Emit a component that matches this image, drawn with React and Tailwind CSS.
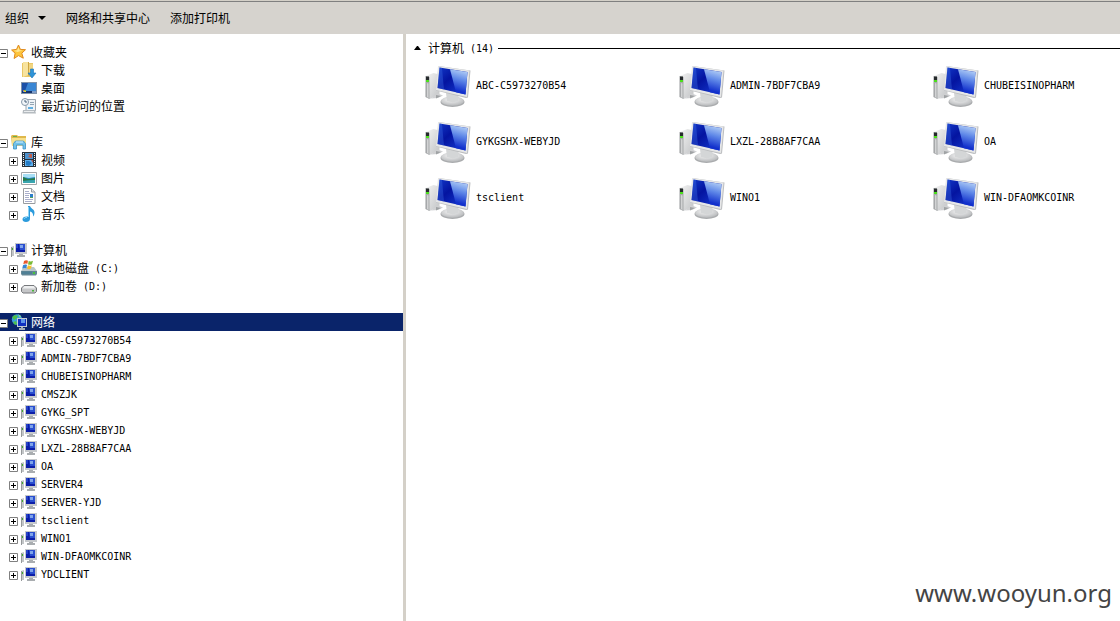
import React, { useState } from "react";

const PcSmall = () => (
  <svg width="16" height="16" viewBox="0 0 16 16" className="shrink-0" aria-hidden="true">
    <path d="M0 5l3-1v10H0z" fill="#c3c6c8" />
    <path d="M0 5h1v10H0z" fill="#96999b" />
    <path d="M1 6h1v2H1z" fill="#3fae2a" />
    <path d="M4 1h12v11H4z" fill="#c6c9cc" />
    <path d="M5 2h9v8H5z" fill="#0c1ea8" />
    <path d="M8 2h6v6H9z" fill="#2a4fd0" />
    <path d="M9 3h3v3H9z" fill="#7fa4ea" />
    <path d="M5 2h2v4H5z" fill="#2743c8" />
    <path d="M8 12h4v1h2v2H6v-2h2z" fill="#a9adb0" />
  </svg>
);

const Star = () => (
  <svg width="16" height="16" viewBox="0 0 16 16" className="shrink-0" aria-hidden="true">
    <path d="M7.500 1l1.900 4.400 5.100.3-3.700 3.500 1.500 5-4.800-2.600-4.400 2.900 1-5.300L.6 6l4.900-.6z" fill="#fdc53c" stroke="#e08a1c" strokeLinejoin="round" />
    <path d="M7.500 3l1 3.200 3 .3-5 1.500-3.500-1.300 3.100-.4z" fill="#ffe794" />
  </svg>
);

const Download = () => (
  <svg width="16" height="16" viewBox="0 0 16 16" className="shrink-0" aria-hidden="true">
    <path d="M1 1h11v14H1z" fill="#e9c766" />
    <path d="M2 0h5v13l-5 2z" fill="#f7e39e" />
    <path d="M7 0h1v13l-1 1z" fill="#cfa640" />
    <path d="M8 2h4v9H8z" fill="#f1d581" />
    <path d="M9.500 7h3v4H15l-4 5-4-5h2.500z" fill="#2f94d8" stroke="#1773b9" strokeWidth=".6" />
  </svg>
);

const Desktop = () => (
  <svg width="16" height="16" viewBox="0 0 16 16" className="shrink-0" aria-hidden="true">
    <path d="M0 2h16v12H0z" fill="#8193ab" />
    <path d="M1 3h14v8H1z" fill="#1b50a8" />
    <path d="M7 3h8v8H4z" fill="#3a86d4" />
    <path d="M1 11h14v2H1z" fill="#16356e" />
    <path d="M2 10h1v1H2z" fill="#e9633a" />
    <path d="M3 10h2v1H3z" fill="#7fc241" />
    <path d="M3 11h2v1H3z" fill="#f4c33b" />
    <path d="M2 11h1v1H2z" fill="#58a8ee" />
    <path d="M11 11h4v2h-4z" fill="#7d9cc8" />
  </svg>
);

const Recent = () => (
  <svg width="16" height="16" viewBox="0 0 16 16" className="shrink-0" aria-hidden="true">
    <path d="M5 1.500h9.500v11H5z" fill="#eef3f7" stroke="#9ba5ae" />
    <path d="M9 4h4v1H9zM9 6h4v1H9z" fill="#93a4b3" />
    <path d="M7 9h5v2H7z" fill="#62afe0" />
    <path d="M2 12h12l1 3.500H1.500z" fill="#b5bbc0" />
    <path d="M3 13h10v1H3z" fill="#e9ecee" />
    <circle cx="4" cy="4" r="3.500" fill="#f1f5f8" stroke="#8799aa" />
    <path d="M4 2v2h2" fill="none" stroke="#46607b" />
  </svg>
);

const Library = () => (
  <svg width="16" height="16" viewBox="0 0 16 16" className="shrink-0" aria-hidden="true">
    <path d="M0 2l1-1h5l1 1h8v10H1z" fill="#dfb84b" />
    <path d="M2 2h4v1H2z" fill="#67b04b" />
    <path d="M1 4h14v8H1z" fill="#f8e08b" />
    <path d="M2.500 15V9.500L4.500 7h8l2 2.500V15h-2.500v-4H5.500v4z" fill="#74c2e9" stroke="#3d92c7" strokeWidth=".8" />
    <path d="M5 8h7" stroke="#d9f3ff" />
  </svg>
);

const Video = () => (
  <svg width="16" height="16" viewBox="0 0 16 16" className="shrink-0" aria-hidden="true">
    <path d="M1 0h14v15H1z" fill="#28323b" />
    <path d="M4 1h8v6H4z" fill="#4b93cf" />
    <path d="M4 8h8v6H4z" fill="#5db0ee" />
    <path d="M6 2l3 1-2 2 4 1V2z" fill="#c25e47" />
    <path d="M5 9h3l3 2-3 3-3-1z" fill="#247bc5" />
    <path d="M10 8h2v3z" fill="#a85b56" />
    <path d="M2.500 1v13M13.500 1v13" stroke="#f2f5f6" strokeDasharray="1 1" />
  </svg>
);

const Picture = () => (
  <svg width="16" height="16" viewBox="0 0 16 16" className="shrink-0" aria-hidden="true">
    <path d="M.5 2.500h15v12H.5z" fill="#fff" stroke="#a2a6a9" />
    <path d="M2 4h12v9H2z" fill="#2a8dc7" />
    <path d="M2 4h12v3L8 8 2 7z" fill="#a9dff5" />
    <path d="M2 7l5 2 7-1v2L2 11z" fill="#277a49" />
    <path d="M2 11l12-1v3H2z" fill="#38a5ae" />
  </svg>
);

const Doc = () => (
  <svg width="16" height="16" viewBox="0 0 16 16" className="shrink-0" aria-hidden="true">
    <path d="M2.500.5h8l3.500 3.500v11.500H2.500z" fill="#fff" stroke="#989ca0" />
    <path d="M10.500.5V4H14" fill="#e2e5e8" stroke="#989ca0" />
    <path d="M4 3.500h4M4 5.500h5M4 7.500h4M4 9.500h4M4 11.500h8M4 13.500h7" stroke="#a9aecb" />
    <path d="M9 6h3v3H9z" fill="#2d7ecb" />
    <path d="M9 9h3v1H9z" fill="#56a55b" />
  </svg>
);

const Music = () => (
  <svg width="16" height="16" viewBox="0 0 16 16" className="shrink-0" aria-hidden="true">
    <path d="M7 0h2c.5 2.500 4.500 3 4.500 6.500 0 1.500-.5 3-1.500 4 .5-3-1-4.500-3-5V13c0 1.800-1.800 3-4 3s-3.500-1-3.500-2.700C1.500 11.500 3.500 10 7 10.500z" fill="#2b9bdc" />
    <path d="M7.500 1v10M3 13c.5-1.200 1.500-1.600 3-1.500" stroke="#8ed5f7" fill="none" />
  </svg>
);

const SystemDrive = () => (
  <svg width="16" height="16" viewBox="0 0 16 16" className="shrink-0" aria-hidden="true">
    <path d="M3 7h10l3 4H0z" fill="#b9c5c9" />
    <path d="M0 11h16v3l-1 1.500H1L0 14z" fill="#648796" />
    <path d="M1 11.500h10V14H1z" fill="#4f7f95" />
    <path d="M12 12h2v2h-2z" fill="#44c43c" />
    <path d="M3 1c1.500-1 2.500-1 4-.3L6.300 4c-1.300-.6-2.600-.5-4 .3z" fill="#e8572c" />
    <path d="M7.700 1c1.500.7 2.800.6 4.300-.2L11 4.300c-1.300.7-2.500.7-4 .1z" fill="#79b935" />
    <path d="M2 5.200c1.400-.8 2.700-.8 4-.2l-.8 3.500c-1.300-.6-2.700-.5-4 .2z" fill="#3585d6" />
    <path d="M6.800 5.300c1.400.6 2.700.6 4-.1L10 8.600c-1.400.8-2.600.7-4 .1z" fill="#f8bf2d" />
  </svg>
);

const Drive = () => (
  <svg width="16" height="16" viewBox="0 0 16 16" className="shrink-0" aria-hidden="true">
    <path d="M.5 10L3 7.500h10l2.500 2.500v3.500L14 15H2L.5 13.500z" fill="#c5c6c8" stroke="#77797c" />
    <path d="M3.500 8h9l2 2.500h-13z" fill="#eeeff0" />
    <path d="M11 12h2v1.500h-2z" fill="#47b53a" />
  </svg>
);

const Network = () => (
  <svg width="16" height="16" viewBox="0 0 16 16" className="shrink-0" aria-hidden="true">
    <circle cx="6" cy="5.500" r="5.200" fill="#3aa0dc" />
    <path d="M1 3l3-2 3 1-1 2-3 2zM2 8l3-1 1 3-2 1z" fill="#4fc04b" />
    <path d="M7 0l3 2-1 2z" fill="#8fe08a" />
    <path d="M6 4h10v9H6z" fill="#c3cbd3" />
    <path d="M7 5h8v7H7z" fill="#1030c0" />
    <path d="M10 5h4v4h-4z" fill="#5e97ea" />
    <path d="M10 13h2v1h2v2H8v-2h2z" fill="#a5adb5" />
  </svg>
);

const PcLarge = () => (
  <svg width="48" height="48" viewBox="0 0 48 48" className="shrink-0" aria-hidden="true">
    <defs>
      <linearGradient id="screen" x1="0" y1="0" x2="1" y2="1">
        <stop offset="0" stopColor="#1238c8" />
        <stop offset=".4" stopColor="#0414a0" />
        <stop offset="1" stopColor="#1840d8" />
      </linearGradient>
      <linearGradient id="glare" x1=".6" y1="0" x2=".4" y2="1">
        <stop offset="0" stopColor="#b4d0f6" />
        <stop offset=".4" stopColor="#5f88e8" />
        <stop offset=".85" stopColor="#1230cc" />
      </linearGradient>
      <linearGradient id="metal" x1="0" y1="0" x2="1" y2="1">
        <stop offset="0" stopColor="#f4f4f4" />
        <stop offset="1" stopColor="#c2c4c6" />
      </linearGradient>
      <radialGradient id="foot" cx=".45" cy=".35" r=".6">
        <stop offset="0" stopColor="#fafafa" />
        <stop offset="1" stopColor="#bcbec0" />
      </radialGradient>
    </defs>
    <path d="M1.500 15l8-3 6 1.500v20L5.500 38l-4-2z" fill="url(#metal)" />
    <path d="M1.500 15l4 1v22l-4-2z" fill="#a6a8aa" />
    <path d="M3 22l1.500.5V37L3 36z" fill="#d2d3d4" />
    <path d="M2 15.500h3V19H2z" fill="#262a2c" />
    <path d="M2 19h3v2H2z" fill="#4be01c" />
    <path d="M7 37.500l7-5 5 2-5 2.500z" fill="#d0d1d3" />
    <path d="M12 34l5 1-5 2.500z" fill="#9fa2a4" />
    <ellipse cx="28.500" cy="41" rx="12" ry="5" fill="#a9abad" />
    <ellipse cx="28.500" cy="40" rx="11.500" ry="4.700" fill="url(#foot)" />
    <path d="M22 32h13l-1 8-5 1.500-6-1.500z" fill="#d4d6d7" />
    <path d="M14.500 5l32 4.500-2.500 27-2 .5-30-7.500z" fill="#bbbdbf" />
    <path d="M14 5l31.500 4.500L43 36 12 29z" fill="#e6e7e8" />
    <path d="M15.500 6.500L43.500 11l-2 22.500L13.500 27z" fill="url(#screen)" />
    <path d="M26 8.200L43.500 11l-2 22.500L32 31.300z" fill="url(#glare)" />
    <path d="M15.500 6.500l2.500.4L20 28.500 13.500 27z" fill="#3a68e0" opacity=".4" />
  </svg>
);

const hosts = [
  "ABC-C5973270B54", "ADMIN-7BDF7CBA9", "CHUBEISINOPHARM", "CMSZJK", "GYKG_SPT",
  "GYKGSHX-WEBYJD", "LXZL-28B8AF7CAA", "OA", "SERVER4", "SERVER-YJD",
  "tsclient", "WINO1", "WIN-DFAOMKCOINR", "YDCLIENT",
];

const tree = [
  {
    name: "收藏夹", Icon: Star,
    items: [
      { name: "下载", Icon: Download, leaf: true },
      { name: "桌面", Icon: Desktop, leaf: true },
      { name: "最近访问的位置", Icon: Recent, leaf: true },
    ],
  },
  {
    name: "库", Icon: Library,
    items: [
      { name: "视频", Icon: Video },
      { name: "图片", Icon: Picture },
      { name: "文档", Icon: Doc },
      { name: "音乐", Icon: Music },
    ],
  },
  {
    name: "计算机", Icon: PcSmall,
    items: [
      { name: "本地磁盘", suffix: "(C:)", Icon: SystemDrive },
      { name: "新加卷", suffix: "(D:)", Icon: Drive },
    ],
  },
  {
    name: "网络", Icon: Network, selected: true,
    items: hosts.map((host) => ({ host, Icon: PcSmall })),
  },
];

const computers = [
  "ABC-C5973270B54", "ADMIN-7BDF7CBA9", "CHUBEISINOPHARM",
  "GYKGSHX-WEBYJD", "LXZL-28B8AF7CAA", "OA",
  "tsclient", "WINO1", "WIN-DFAOMKCOINR",
];

const Mono = ({ children }) => (
  <span className="pt-0.5 font-['DejaVu_Sans_Mono',monospace] text-[10px]">{children}</span>
);

const Toggle = ({ open, label, onClick }) => (
  <button type="button" aria-label={label} aria-expanded={open} onClick={onClick} className="mt-[3px] size-[9px] shrink-0">
    <svg width="9" height="9" viewBox="0 0 9 9" aria-hidden="true">
      <path d="M.5.5h8v8h-8z" fill="#fff" stroke="#808080" />
      <path d={open ? "M2 4.500h5" : "M2 4.500h5M4.500 2v5"} stroke="#000" />
    </svg>
  </button>
);

function Group({ group }) {
  const [open, setOpen] = useState(true);
  const { name, Icon, selected, items } = group;
  return (
    <li>
      <div className={selected ? "flex h-[18px] items-center bg-[#0a246a] text-white" : "flex h-[18px] items-center"}>
        <span className="-ml-px mr-[3px] flex">
          <Toggle open={open} label={name} onClick={() => setOpen(!open)} />
        </span>
        <Icon />
        <button type="button" className="ml-1 whitespace-nowrap">{name}</button>
      </div>
      {open && (
        <ul>
          {items.map((item) => (
            <li key={item.name || item.host} className="flex h-[18px] items-center pl-[9px]">
              {item.leaf ? <span className="w-[9px]" /> : <Toggle open={false} label={item.name || item.host} />}
              <span className="ml-[3px] flex"><item.Icon /></span>
              <button type="button" className="ml-1 flex items-center whitespace-pre">
                {item.name}
                {item.suffix && <Mono>{" " + item.suffix}</Mono>}
                {item.host && <Mono>{item.host}</Mono>}
              </button>
            </li>
          ))}
        </ul>
      )}
    </li>
  );
}

export default function App() {
  return (
    <div className="relative flex min-h-screen flex-col bg-white font-['Noto_Sans_CJK_SC',sans-serif] text-xs leading-[18px] text-black">
      <header className="flex h-[34px] items-center border-t border-[#d4d0c8] bg-[#d6d3ce]">
        <div className="flex h-full w-full items-center gap-5 border-t border-[#808080] pl-[5px]">
          <button type="button" className="flex items-center gap-[9px]">
            组织
            <svg width="8" height="4" viewBox="0 0 8 4" aria-hidden="true"><path d="M0 0h8L4 4z" /></svg>
          </button>
          <button type="button">网络和共享中心</button>
          <button type="button">添加打印机</button>
        </div>
      </header>
      <div className="flex flex-1">
        <nav className="w-[406px] shrink-0 border-r-3 border-[#d4d0c8] pt-[9px]" aria-label="导航">
          <ul className="flex flex-col gap-[18px]">
            {tree.map((group) => <Group key={group.name} group={group} />)}
          </ul>
        </nav>
        <main className="min-w-0 flex-1 overflow-hidden pt-[5px]">
          <h2 className="flex h-[18px] items-center pl-2">
            <svg width="7" height="4" viewBox="0 0 7 4" className="mr-[7px]" aria-hidden="true"><path d="M0 4h7L4 0H3z" /></svg>
            <span className="flex items-center whitespace-pre">计算机<Mono>{" (14)"}</Mono></span>
            <span className="mt-px ml-1 h-px flex-1 bg-black" />
          </h2>
          <ul className="grid grid-cols-[repeat(3,254px)] pl-[18px]">
            {computers.map((name) => (
              <li key={name} className="h-14">
                <button type="button" className="flex h-full items-center gap-1 text-left">
                  <PcLarge />
                  <Mono>{name}</Mono>
                </button>
              </li>
            ))}
          </ul>
        </main>
      </div>
      <p className="absolute right-2 bottom-3 font-['Noto_Sans',sans-serif] text-2xl text-[#444]">www.wooyun.org</p>
    </div>
  );
}
